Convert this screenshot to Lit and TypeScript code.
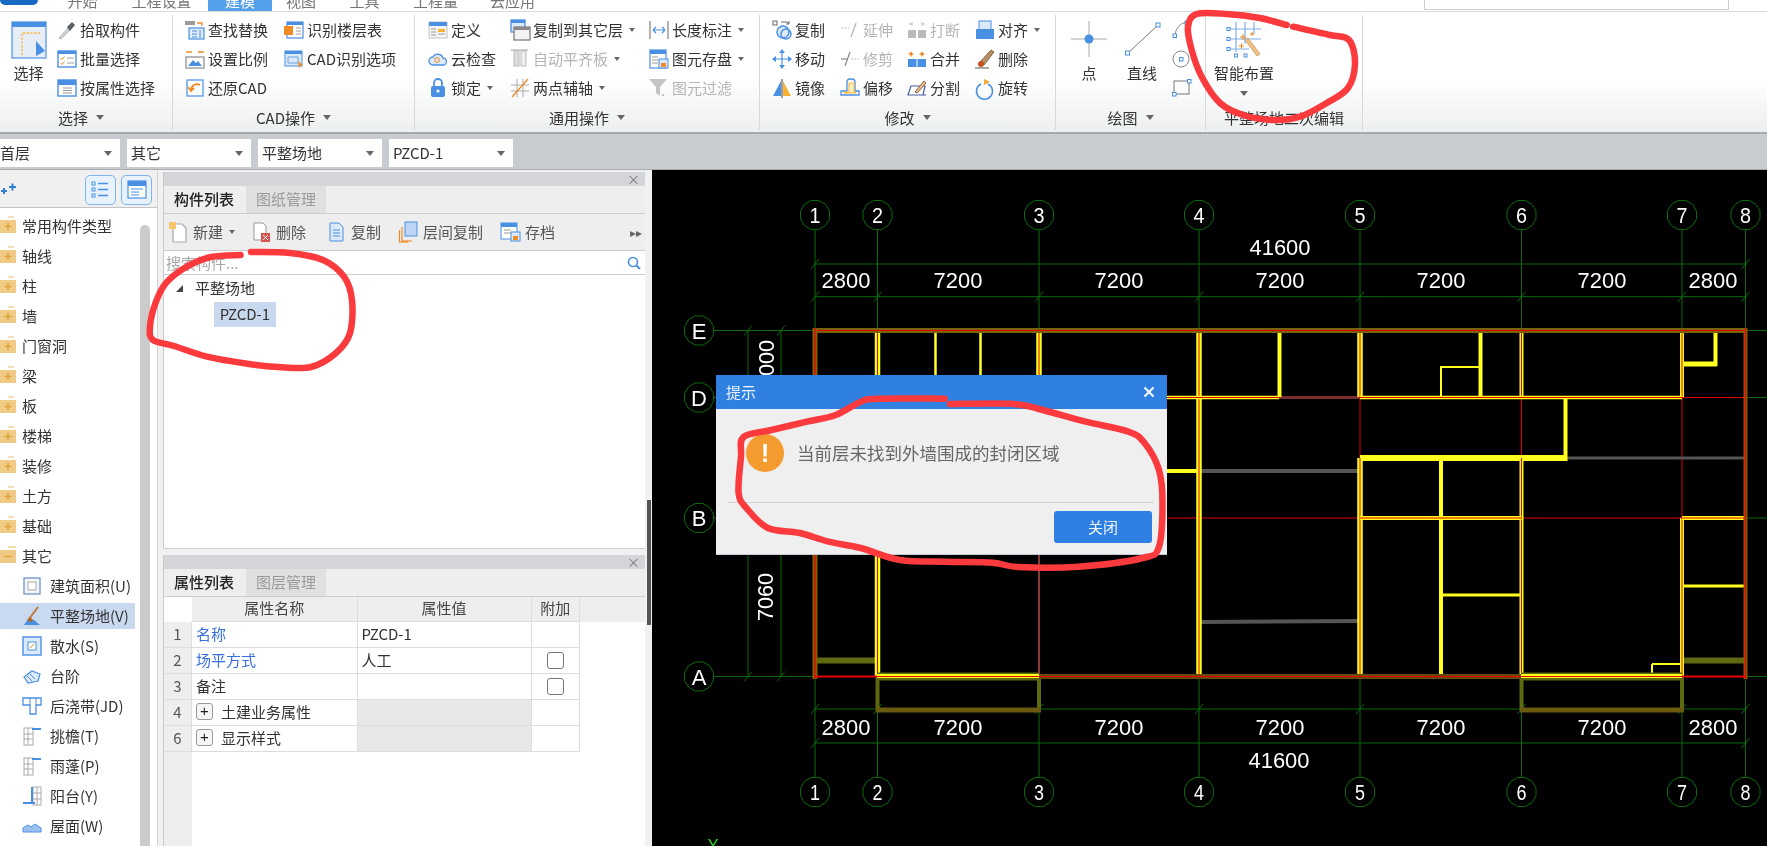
import { LitElement, html, css, svg, nothing } from "lit";
import { customElement } from "lit/decorators.js";

const B = "#4a90e2", L = "#dce9f8", O = "#f08a24", G = "#9b9b9b";

const icons: Record<string, any> = {
  select: svg`<rect x="1" y="1" width="34" height="36" fill="#e6edf7" stroke="#6ea6e6" stroke-width="1.5"/><rect x="1" y="1" width="34" height="5" fill="${B}"/><path d="M11 34V12H30" fill="none" stroke="#f9b233" stroke-width="1.4" stroke-dasharray="2.2 1.6"/><path d="M25 20V35L34 30Z" fill="${B}"/>`,
  dropper: svg`<path d="M2 18L11 8L13 10L4 19Z" fill="#cfd6dd" stroke="${G}" stroke-width=".7"/><path d="M10 7L15 2L18 5L13 11Z" fill="#5a5f66"/>`,
  batch: svg`<rect x="1" y="2" width="18" height="16" fill="#fff" stroke="${B}" stroke-width="1.4"/><rect x="1" y="2" width="18" height="3" fill="${B}"/><path d="M3.5 9l1.5 1.5L7.5 7.5M3.5 14l1.5 1.5L7.5 12.5" fill="none" stroke="${O}"/><path d="M10 9h7M10 14h7" stroke="${G}"/>`,
  attr: svg`<rect x="1" y="2" width="18" height="16" fill="#fff" stroke="${B}" stroke-width="1.4"/><rect x="1" y="2" width="18" height="5" fill="${B}"/><path d="M6 10h9M6 12.5h9M6 15h9" stroke="${G}"/>`,
  find: svg`<rect x="0" y="1" width="10" height="4" fill="${G}"/><path d="M12 3h5v3" fill="none" stroke="${O}" stroke-width="1.3"/><rect x="4" y="8" width="15" height="11" fill="${L}" stroke="${B}" stroke-width="1.2"/><path d="M7 11h5M7 14h5M7 17h5M15 10v8" stroke="${B}"/>`,
  scale: svg`<path d="M1 3h6M13 3h6" stroke="${O}" stroke-width="1.6"/><rect x="1" y="8" width="18" height="11" fill="#fff" stroke="${G}" stroke-width="1.4"/><path d="M3 17l5-6 3 3 2-2 4 5Z" fill="${B}"/>`,
  restore: svg`<rect x="2" y="2" width="16" height="16" fill="none" stroke="${B}" stroke-width="1.2"/><path d="M15 7a6 6 0 0 0-9 5M3 9l3 4 3-3" fill="none" stroke="${O}" stroke-width="1.8"/>`,
  floor: svg`<rect x="3" y="2" width="16" height="16" fill="#fff" stroke="${B}" stroke-width="1.2"/><rect x="3" y="2" width="16" height="3" fill="${B}"/><rect x="0" y="6" width="9" height="9" fill="${O}"/><path d="M12 8h5M12 11h5M12 14h5" stroke="${G}"/>`,
  cadopt: svg`<rect x="1" y="2" width="17" height="15" fill="${L}" stroke="${B}"/><rect x="1" y="2" width="17" height="3" fill="${B}"/><path d="M4 8h10v6H4Z" fill="none" stroke="${B}" stroke-width=".8"/><path d="M14 12l5 4-3 1-1 3Z" fill="${O}"/>`,
  define: svg`<rect x="1" y="2" width="18" height="16" fill="#f4f4f4" stroke="#c4c4c4"/><rect x="1" y="2" width="18" height="4" fill="${B}"/><path d="M3 9h5M3 12h5M3 15h5" stroke="${G}"/><path d="M10 9h7v3h-7Z" fill="#f9b233"/><path d="M10 14h7" stroke="${G}"/>`,
  cloud: svg`<path d="M5 16a4 4 0 0 1 0-8 5.5 5.5 0 0 1 10 1 3.5 3.5 0 0 1 0 7Z" fill="${L}" stroke="${B}" stroke-width="1.3"/><circle cx="9" cy="11" r="2.4" fill="none" stroke="${O}"/>`,
  lock: svg`<rect x="3" y="8" width="14" height="11" rx="2" fill="${B}"/><path d="M6 8V5a4 4 0 0 1 8 0v3" fill="none" stroke="${B}" stroke-width="1.8"/><circle cx="10" cy="13" r="1.6" fill="#fff"/>`,
  copyfl: svg`<rect x="1" y="0" width="14" height="12" fill="${L}" stroke="${B}" stroke-width="1.3"/><rect x="1" y="0" width="14" height="3" fill="${B}"/><rect x="4" y="7" width="16" height="13" fill="#f3f3f3" stroke="#777" stroke-width="1.2"/><rect x="4" y="7" width="16" height="3" fill="#8a8a8a"/>`,
  align: svg`<path d="M1 1h17" stroke="#bbb" stroke-width="1.5"/><rect x="4" y="2" width="5" height="15" fill="#ddd" stroke="#bbb"/><rect x="11" y="2" width="5" height="15" fill="#eee" stroke="#bbb"/>`,
  axis: svg`<path d="M1 7h18M1 13h18M7 1v18M13 1v18" stroke="#aaa"/><path d="M2 19L18 1" stroke="${O}" stroke-width="1.3"/>`,
  len: svg`<path d="M1 1v18M19 1v18" stroke="#666" stroke-width="1"/><path d="M4 10h12M4 10l3-3M4 10l3 3M16 10l-3-3M16 10l-3 3" stroke="${B}" fill="none" stroke-width="1.2"/>`,
  save: svg`<rect x="1" y="1" width="16" height="18" fill="#fff" stroke="${B}" stroke-width="1.2"/><rect x="1" y="1" width="16" height="4" fill="${B}"/><path d="M3 8h6M3 11h6M3 14h6" stroke="${G}"/><rect x="10" y="10" width="9" height="9" fill="${L}" stroke="${B}"/><rect x="12" y="14" width="5" height="4" fill="${O}"/>`,
  filter: svg`<path d="M0 1H18L11 9V18L7 15V9Z" fill="#c4c4c4"/><path d="M13 17h2" stroke="#c4c4c4" stroke-width="2"/>`,
  copy: svg`<rect x="1" y="1" width="4" height="4" fill="none" stroke="#666"/><path d="M9 2h6l2 2M17 1v3h-3" fill="none" stroke="#666"/><circle cx="11" cy="12" r="6" fill="${L}" stroke="${B}" stroke-width="1.5"/><circle cx="14" cy="14" r="5" fill="none" stroke="${B}" stroke-width="1.5"/>`,
  move: svg`<path d="M10 3v14M3 10h14" stroke="${B}" stroke-width="1.2"/><path d="M10 0l3 4H7ZM10 20l3-4H7ZM0 10l4-3v6ZM20 10l-4-3v6Z" fill="${B}"/>`,
  mirror: svg`<path d="M1 18L9 3V18Z" fill="${B}"/><path d="M10 1v19" stroke="#444"/><path d="M11 3L19 18H11Z" fill="#f9b233"/>`,
  extend: svg`<path d="M1 8h8" stroke="#bbb" stroke-dasharray="2 1.5" stroke-width="1.2"/><path d="M11 17L16 3" stroke="#bbb" stroke-width="1.4"/>`,
  trim: svg`<path d="M1 10h7" stroke="#888" stroke-width="1.2"/><path d="M5 17L10 3" stroke="#888" stroke-width="1.2"/><path d="M11 10h8" stroke="#bbb" stroke-dasharray="2 1.5"/>`,
  offset: svg`<path d="M1 17v-4h6V4q0-3 3-3h2q3 0 3 3v9h4v4Z" fill="#fff" stroke="${B}" stroke-width="1.3"/><path d="M4 15h12v-1h-2V5H9v9H4Z" fill="#fdf0c4" stroke="#f9b233"/>`,
  brk: svg`<path d="M2 4h3M15 4h3M5 2v4M15 2v4" stroke="#bbb"/><rect x="1" y="10" width="8" height="8" fill="#bbb"/><rect x="11" y="10" width="8" height="8" fill="#bbb"/>`,
  merge: svg`<path d="M4 2l1 2 2 1-2 1-1 2-1-2-2-1 2-1ZM15 2l1 2 2 1-2 1-1 2-1-2-2-1 2-1Z" fill="${O}"/><rect x="1" y="10" width="18" height="8" fill="${B}"/><path d="M10 10v8" stroke="#fff"/>`,
  split: svg`<path d="M1 17L4 8H18L16 17ZM1 17h18" fill="#fff" stroke="#46609c" stroke-width="1.2"/><path d="M8 14L17 3l2 2-9 10Z" fill="#f2cc7a" stroke="#855"/>`,
  aligno: svg`<rect x="4" y="1" width="12" height="9" fill="${L}" stroke="${B}"/><rect x="1" y="9" width="18" height="10" fill="${B}"/>`,
  del: svg`<path d="M5 13L16 1l3 2L9 16Z" fill="#b89066" stroke="#6a4a2a" stroke-width=".8"/><circle cx="6" cy="15" r="3" fill="#c8501c"/><path d="M0 19h14" stroke="#555"/>`,
  rotate: svg`<path d="M6 5a8 8 0 1 0 7 0" fill="none" stroke="${B}" stroke-width="1.5" transform="translate(0 1)"/><path d="M9 1l6 3-6 3Z" fill="#f9a533"/>`,
  point: svg`<path d="M18 0v36M0 18h36" stroke="#a9a9a9" stroke-width="1"/><circle cx="18" cy="18" r="4.5" fill="${B}"/>`,
  line: svg`<path d="M4 32L34 4" stroke="#777" stroke-width="1"/><rect x="1.5" y="30" width="4" height="4" fill="#fff" stroke="${B}"/><rect x="32" y="2" width="4" height="4" fill="#fff" stroke="${B}"/>`,
  arc: svg`<path d="M3 15Q4 5 14 2" fill="none" stroke="#888"/><rect x="1" y="14" width="3.5" height="3.5" fill="#fff" stroke="${B}"/><rect x="13" y="1" width="3.5" height="3.5" fill="#fff" stroke="${B}"/>`,
  circle: svg`<circle cx="9" cy="10" r="8" fill="none" stroke="#888"/><rect x="7.5" y="8.5" width="3.5" height="3.5" fill="#fff" stroke="${B}"/>`,
  rectd: svg`<rect x="2" y="3" width="15" height="13" fill="none" stroke="#777"/><rect x="0.5" y="14.5" width="3.5" height="3.5" fill="#fff" stroke="${B}"/><rect x="15.5" y="1.5" width="3.5" height="3.5" fill="#fff" stroke="${B}"/>`,
  smart: svg`<path d="M3 8h32M3 18h32M3 28h20M10 1v30M19 1v22M28 1v12" stroke="#7fb0ea" stroke-width="1.2"/><g fill="#fff" stroke="${B}"><rect x="1" y="6.5" width="3" height="3"/><rect x="1" y="16.5" width="3" height="3"/><rect x="1" y="26.5" width="3" height="3"/><rect x="8.5" y="33" width="3" height="3"/><rect x="18" y="33" width="3" height="3"/></g><path d="M19 19L31 35l3-2L22 17Z" fill="#eec287" stroke="#c98d4a" stroke-width=".7"/><path d="M14 16h6M17 13v6M13 25h5M15.5 22.5v5M24 13h4M26 11v4" stroke="${O}" stroke-width="1.1"/>`,
  newf: svg`<path d="M4 2h9l4 4v14H4Z" fill="#fff" stroke="#aaa" stroke-width="1.2"/><path d="M0 0h7v7H0Z" fill="#f7c66a"/>`,
  delf: svg`<path d="M2 1h9l3 3v14H2Z" fill="#fff" stroke="#999"/><rect x="9" y="11" width="9" height="9" fill="#d9534f"/><path d="M11 13l5 5M16 13l-5 5" stroke="#fff"/>`,
  copyf: svg`<path d="M3 1h9l4 4v14H3Z" fill="${L}" stroke="${B}"/><path d="M6 8h7M6 11h7M6 14h7" stroke="${B}"/>`,
  fcopy: svg`<rect x="6" y="0" width="12" height="14" fill="#bcd4f5" stroke="${B}"/><path d="M3 5v14h10M0.5 8v12h9" fill="none" stroke="${O}" stroke-width="1.2"/>`,
  archive: svg`<rect x="0" y="1" width="16" height="16" fill="#fff" stroke="${B}"/><rect x="0" y="1" width="16" height="4" fill="${B}"/><path d="M3 8h7M3 11h7" stroke="${G}"/><rect x="10" y="10" width="9" height="9" fill="${L}" stroke="${B}"/><rect x="12" y="14" width="5" height="4" fill="${O}"/>`,
  search: svg`<circle cx="7" cy="7" r="4.5" fill="none" stroke="${B}" stroke-width="1.6"/><path d="M10 10l4 4" stroke="${B}" stroke-width="2"/>`,
  fplus: svg`<path d="M0 4h16v13H0Z" fill="#efcb85"/><path d="M8 0h6v2H8Z" fill="#f4dfb4"/><path d="M8 7v7M4.5 10.5h7" stroke="#e0a43c" stroke-width="1.6"/>`,
  fminus: svg`<path d="M0 4h16v13H0Z" fill="#efcb85"/><path d="M8 0h8v2H8Z" fill="#f4dfb4"/><path d="M4.5 10.5h7" stroke="#e0a43c" stroke-width="1.6"/>`,
  area: svg`<rect x="2" y="2" width="16" height="16" fill="#f3f6fb" stroke="#7a9bc8" stroke-width="1.4"/><rect x="6" y="6" width="8" height="8" fill="#fff" stroke="#aaa"/>`,
  level: svg`<path d="M2 19l4-6 6 1 6 5Z" fill="${B}"/><path d="M7 13L16 1" stroke="#c27a3a" stroke-width="2"/><path d="M5 14l3-3 3 3-2 2Z" fill="#b5651d"/>`,
  apron: svg`<rect x="1" y="1" width="18" height="18" fill="${L}" stroke="${B}" stroke-width="1.4"/><rect x="6" y="6" width="8" height="8" fill="#fff" stroke="${B}"/><path d="M8 12l4-4" stroke="${O}"/>`,
  step: svg`<path d="M2 11l8-6 8 3-2 7-10 2Z" fill="${L}" stroke="${B}" stroke-width="1.2"/><path d="M5 10l5 5M8 8l5 5" stroke="${B}"/>`,
  pour: svg`<path d="M1 2h18v7h-5v9H8V9H1Z" fill="#fff" stroke="${B}" stroke-width="1.3"/><path d="M8 2v7M14 2v7" stroke="${B}"/>`,
  eave: svg`<rect x="2" y="2" width="9" height="17" fill="#fff" stroke="#aaa"/><path d="M2 8h9M2 13h9M6 2v17" stroke="#aaa"/><path d="M10 3h9" stroke="${B}" stroke-width="2"/>`,
  balcony: svg`<rect x="11" y="1" width="8" height="18" fill="#fff" stroke="#aaa"/><path d="M15 1v18M11 7h8M11 13h8" stroke="#aaa"/><path d="M10 1v15M1 17h12" stroke="${B}" stroke-width="2"/>`,
  roof: svg`<path d="M1 16V12l5-3 3 2 4-3 6 4v4Z" fill="#9cc1ee" stroke="${B}"/>`,
  tlist: svg`<g fill="none" stroke="${B}"><rect x="1" y="2" width="3" height="3"/><rect x="1" y="8" width="3" height="3"/><rect x="1" y="14" width="3" height="3"/></g><path d="M7 3.5h10M7 9.5h10M7 15.5h10" stroke="${B}" stroke-width="1.3"/>`,
  tform: svg`<rect x="1" y="1" width="18" height="17" fill="#fff" stroke="${B}" stroke-width="1.2"/><rect x="1" y="1" width="18" height="5" fill="${B}"/><path d="M4 9h12M4 12h8M4 15h8" stroke="${B}"/>`,
};

const ico = (n: string, s = 20) => html`<svg class="ic" width="${s}" height="${s}" viewBox="0 0 ${s} ${s}">${icons[n]}</svg>`;

type It = [string, string, number?, number?];
interface Col { w?: number; items?: It[]; big?: [string, string, number?, number?]; }
interface Grp { w: number; pad: number; label: string; caret: number; shift?: number; cols: Col[]; }

const groups: Grp[] = [
  { w: 173, pad: 0, label: "选择", caret: 1, shift: 10, cols: [
    { w: 57, big: ["select", "选择", 36] },
    { items: [["dropper", "拾取构件"], ["batch", "批量选择"], ["attr", "按属性选择"]] } ] },
  { w: 242, pad: 12, label: "CAD操作", caret: 1, cols: [
    { w: 99, items: [["find", "查找替换"], ["scale", "设置比例"], ["restore", "还原CAD"]] },
    { items: [["floor", "识别楼层表"], ["cadopt", "CAD识别选项"]] } ] },
  { w: 345, pad: 13, label: "通用操作", caret: 1, cols: [
    { w: 82, items: [["define", "定义"], ["cloud", "云检查"], ["lock", "锁定", 1]] },
    { w: 139, items: [["copyfl", "复制到其它层", 1], ["align", "自动平齐板", 1, 1], ["axis", "两点辅轴", 1]] },
    { items: [["len", "长度标注", 1], ["save", "图元存盘", 1], ["filter", "图元过滤", 0, 1]] } ] },
  { w: 296, pad: 12, label: "修改", caret: 1, cols: [
    { w: 68, items: [["copy", "复制"], ["move", "移动"], ["mirror", "镜像"]] },
    { w: 67, items: [["extend", "延伸", 0, 1], ["trim", "修剪", 0, 1], ["offset", "偏移"]] },
    { w: 68, items: [["brk", "打断", 0, 1], ["merge", "合并"], ["split", "分割"]] },
    { items: [["aligno", "对齐", 1], ["del", "删除"], ["rotate", "旋转"]] } ] },
  { w: 150, pad: 0, label: "绘图", caret: 1, cols: [
    { w: 66, big: ["point", "点", 36] },
    { w: 40, big: ["line", "直线", 36] },
    { items: [["", ""], ["", ""], ["", ""]] } ] },
  { w: 157, pad: 0, label: "平整场地二次编辑", caret: 0, cols: [
    { w: 76, big: ["smart", "智能布置", 36, 1] } ] },
];

const tabs: [string, number][] = [["开始", 65], ["工程设置", 93], ["建模", 64], ["视图", 58], ["工具", 69], ["工程量", 73], ["云应用", 81]];
const rail: [string, string, number?][] = [
  ["fplus", "常用构件类型"], ["fplus", "轴线"], ["fplus", "柱"], ["fplus", "墙"], ["fplus", "门窗洞"], ["fplus", "梁"],
  ["fplus", "板"], ["fplus", "楼梯"], ["fplus", "装修"], ["fplus", "土方"], ["fplus", "基础"], ["fminus", "其它"],
  ["area", "建筑面积(U)", 1], ["level", "平整场地(V)", 2], ["apron", "散水(S)", 1], ["step", "台阶", 1], ["pour", "后浇带(JD)", 1],
  ["eave", "挑檐(T)", 1], ["eave", "雨蓬(P)", 1], ["balcony", "阳台(Y)", 1], ["roof", "屋面(W)", 1],
];

const GX = [814, 876.5, 1038, 1198, 1359, 1520.5, 1681, 1744.5];
const GY: [string, number][] = [["E", 330.5], ["D", 397.5], ["B", 518], ["A", 676.5]];
const GREEN = "#0b6a0b", RED = "#e60000", YEL = "#ffff20", OLV = "#5f6a10", BRN = "#8a5c08", GRY = "#555555";
const poly = (cx: number, cy: number, r: number) =>
  Array.from({ length: 12 }, (_, i) => { const a = Math.PI * 2 * i / 12 + Math.PI / 12; return `${cx + r * Math.cos(a)},${cy + r * Math.sin(a)}`; }).join(" ");
const ln = (x1: number, y1: number, x2: number, y2: number, c: string, w = 1) =>
  svg`<line x1="${x1}" y1="${y1}" x2="${x2}" y2="${y2}" stroke="${c}" stroke-width="${w}"/>`;
const yr = (x1: number, y1: number, x2: number, y2: number, w = 5) => [ln(x1, y1, x2, y2, YEL, w), ln(x1, y1, x2, y2, RED, 1)];
const ow = (x1: number, y1: number, x2: number, y2: number, c = OLV, w = 5) => [ln(x1, y1, x2, y2, c, w), ln(x1, y1, x2, y2, RED, 1.2)];
const tick = (x: number, y: number) => ln(x - 4, y + 5, x + 4, y - 5, GREEN);
const dim = (x: number, y: number, t: string) => svg`<text class="dim" x="${x}" y="${y}" text-anchor="middle" textLength="${t.length * 12.2}" lengthAdjust="spacingAndGlyphs">${t}</text>`;

function cad() {
  const yTop = 264, yTop2 = 296.7, yBot = 709, yBot2 = 743;
  const vals = ["2800", "7200", "7200", "7200", "7200", "7200", "2800"];
  const mids = [845, 957, 1118, 1279, 1440, 1601, 1712];
  return svg`
    ${GX.map((x, i) => svg`
      ${ln(x, 230, x, 330, GREEN)}${ln(x, 677, x, 777, GREEN)}
      <polygon points="${poly(x, 215, 15)}" fill="none" stroke="${GREEN}"/>
      <polygon points="${poly(x, 792, 15)}" fill="none" stroke="${GREEN}"/>
      <text class="bub" x="${x}" y="223" text-anchor="middle" textLength="11" lengthAdjust="spacingAndGlyphs">${i + 1}</text>
      <text class="bub" x="${x}" y="800" text-anchor="middle" textLength="10" lengthAdjust="spacingAndGlyphs">${i + 1}</text>
      ${tick(x, yTop2)}${tick(x, yBot)}`)}
    ${GY.map(([n, y]) => svg`
      ${ln(713, y, 814, y, GREEN)}${ln(1745, y, 1767, y, GREEN)}
      <polygon points="${poly(698, y, 15)}" fill="none" stroke="${GREEN}"/>
      <text class="bub" x="698" y="${y + 8}" text-anchor="middle">${n}</text>
      ${tick(747, y)}${tick(780, y)}`)}
    ${ln(814, yTop, 1746, yTop, GREEN)}${ln(814, yTop2, 1746, yTop2, GREEN)}
    ${ln(814, yBot, 1746, yBot, GREEN)}${ln(814, yBot2, 1746, yBot2, GREEN)}
    ${tick(814, yTop)}${tick(1744.5, yTop)}${tick(814, yBot2)}${tick(1744.5, yBot2)}
    ${ln(747, 330, 747, 677, GREEN)}${ln(780, 330, 780, 677, GREEN)}
    ${dim(1279, 255, "41600")}${dim(1278, 768, "41600")}
    ${mids.map((m, i) => svg`${dim(m, 288, vals[i])}${dim(m, 735, vals[i])}`)}
    <text class="dim" transform="translate(773 364) rotate(-90)" text-anchor="middle" textLength="48" lengthAdjust="spacingAndGlyphs">3000</text>
    <text class="dim" transform="translate(772 597) rotate(-90)" text-anchor="middle" textLength="48" lengthAdjust="spacingAndGlyphs">7060</text>

    ${ln(876.5, 660.5, 816, 660.5, OLV, 6)}${ln(1681, 660.5, 1743, 660.5, OLV, 6)}
    ${ln(876.5, 677, 876.5, 710, OLV, 4)}${ln(1038, 677, 1038, 710, OLV, 4)}${ln(875, 710, 1040, 710, "#6b5b10", 5)}
    ${ln(1520.5, 677, 1520.5, 710, OLV, 4)}${ln(1681, 677, 1681, 710, OLV, 4)}${ln(1519, 710, 1683, 710, "#6b5b10", 5)}

    ${ln(1038, 397, 1038, 677, "#8a3a3a", 2)}
    ${ln(1278, 397.5, 1359, 397.5, "#7a3030", 3)}
    ${ln(1359, 397, 1359, 458, RED)}${ln(1520.5, 397, 1520.5, 458, RED)}${ln(1681, 397, 1681, 518, RED)}
    ${ln(1198, 518, 1359, 518, RED)}${ln(1520, 518, 1681, 518, RED)}${ln(880, 518, 1198, 518, RED)}
    ${ln(1681, 397.5, 1744, 397.5, RED)}${ln(1198, 397, 1198, 677, RED)}
    ${ln(1564, 458, 1744, 458, GRY, 3)}${ln(1198, 471, 1359, 471, GRY, 4)}${ln(1200, 622, 1359, 621, GRY, 4)}

    ${ln(934.5, 332, 934.5, 400, YEL, 2.5)}${ln(979.5, 332, 979.5, 400, YEL, 2.5)}
    ${ln(1278.5, 332, 1278.5, 397, YEL, 4)}${ln(1479.5, 332, 1479.5, 397, YEL, 4)}
    ${ln(1440, 367, 1480, 367, YEL, 2)}${ln(1440, 366, 1440, 397, YEL, 2)}
    ${ln(1714.5, 329, 1714.5, 366, YEL, 4)}${ln(1683, 364, 1716, 364, YEL, 5)}
    ${ln(1564.5, 397, 1564.5, 461, YEL, 4)}${ln(1359, 458, 1566, 458, YEL, 6)}
    ${ln(1440, 458, 1440, 677, YEL, 4)}${ln(1440, 595, 1520, 595, YEL, 3)}
    ${ln(1681, 586, 1744, 586, YEL, 3)}${ln(1198, 471, 1140, 471, YEL, 4)}
    ${ln(1651, 664, 1681, 664, YEL, 2)}${ln(1651, 664, 1651, 677, YEL, 2)}
    ${yr(876.5, 332, 876.5, 677, 5.5)}${yr(1038, 332, 1038, 397, 5.5)}
    ${yr(1198, 332, 1198, 677, 5.5)}${yr(1359, 332, 1359, 397, 5.5)}${yr(1359, 458, 1359, 677, 5.5)}
    ${yr(1520.5, 332, 1520.5, 397, 4)}${yr(1520.5, 458, 1520.5, 677, 4)}${yr(1681, 332, 1681, 397, 4)}${yr(1681, 518, 1681, 677, 4)}
    ${yr(876, 397.5, 1278, 397.5, 3.5)}${yr(1359, 397.5, 1681, 397.5, 3.5)}
    ${yr(1359, 518, 1520.5, 518, 4)}${yr(1681, 518, 1744, 518, 4)}

    ${ow(812, 330.5, 1746, 330.5, "#7a6208", 5)}
    ${ow(814, 328, 814, 679, BRN, 5)}${ow(1744.5, 328, 1744.5, 679, BRN, 4)}
    ${ln(814, 676.5, 876, 676.5, RED, 2)}${ln(1681, 676.5, 1745, 676.5, RED, 2)}
    ${ow(1038, 676.5, 1520, 676.5, "#6a4a08", 5)}
    ${ln(876, 676.5, 1038, 676.5, OLV, 8)}${ln(876, 676, 1038, 676, YEL, 4)}${ln(876, 676.5, 1038, 676.5, RED, 1)}
    ${ln(1520, 676.5, 1681, 676.5, OLV, 8)}${ln(1520, 676, 1681, 676, YEL, 4)}${ln(1520, 676.5, 1681, 676.5, RED, 1)}
    <text class="axis" x="712" y="851" text-anchor="middle">Y</text>
  `;
}

const smooth = (p: number[][]) => {
  let d = `M${p[0][0]} ${p[0][1]}`;
  for (let i = 0; i < p.length - 1; i++) {
    const a = p[Math.max(i - 1, 0)], b = p[i], c = p[i + 1], e = p[Math.min(i + 2, p.length - 1)];
    d += `C${b[0] + (c[0] - a[0]) / 6} ${b[1] + (c[1] - a[1]) / 6} ${c[0] - (e[0] - b[0]) / 6} ${c[1] - (e[1] - b[1]) / 6} ${c[0]} ${c[1]}`;
  }
  return d;
};
const pens = [
  [[240.5, 255], [211, 257], [186.6, 266.7], [166, 283], [155.5, 303], [150, 326.7], [153, 340], [174, 346], [207, 356.7], [249, 364], [278, 367], [311, 367], [336, 353], [350, 333], [352, 300], [344, 276.7], [323, 260], [290, 253], [251, 252]],
  [[944.6, 398.7], [878.6, 398.7], [860.7, 401.7], [835.7, 415], [807, 421.7], [771.4, 430], [743.6, 437], [741, 456.7], [738.6, 493], [746.4, 508], [767.9, 528], [800, 533], [828.6, 541.7], [860.7, 548], [900, 560], [946, 561.7], [992.9, 562.7], [1018, 567], [1078.6, 566.7], [1142.9, 558], [1159, 546.7], [1162.5, 503], [1159, 470], [1144.6, 443], [1128.6, 431.7], [1085.7, 421.7], [1042.9, 410], [1014, 404], [950, 404]],
  [[1286.7, 25], [1260, 18], [1226.7, 14], [1196.7, 14], [1188, 26.7], [1191.7, 50], [1201.7, 76.7], [1220, 103], [1243, 115], [1273, 120], [1300, 116.7], [1326.7, 103], [1348, 88], [1355, 63], [1349, 40], [1330, 35], [1293, 26.7]],
];

const smallDraw = ["arc", "circle", "rectd"];

@customElement("app-root")
export class AppRoot extends LitElement {
  static styles = css`
    :host { display: block; position: relative; width: 1767px; height: 846px; overflow: hidden; background: #fff;
      font: 15px/20px "Noto Sans CJK SC", "Liberation Sans", sans-serif; color: #333; }
    .root { display: flex; flex-direction: column; height: 846px; filter: blur(.4px); }
    .ic { display: block; flex: none; overflow: visible; }

    .top { height: 12px; flex: none; display: flex; overflow: hidden; background: #fff; border-bottom: 1px solid #dcdcdc; box-sizing: border-box; position: relative; }
    .logo { width: 38px; height: 5px; flex: none; background: #1769c4; border-radius: 0 0 8px 8px; }
    .logoGap { width: 12px; flex: none; }
    .tab { flex: none; text-align: center; color: #777; }
    .tab span { display: block; line-height: 16px; margin-top: -7px; }
    .tab.on { background: #55a0ea; color: #fff; }
    .tabGap { flex: 1; }
    .tsearch { width: 305px; height: 10px; flex: none; box-sizing: border-box; background: #fff; border: 1px solid #cfcfcf; border-top: 0; margin-right: 38px; }

    .ribbon { height: 122px; flex: none; display: flex; box-sizing: border-box; border-bottom: 2px solid #a6a9ac;
      background: linear-gradient(#fff 0, #fff 55%, #eceff0 100%); }
    .grp { flex: none; display: flex; flex-direction: column; box-sizing: border-box; margin-top: 3px; height: 115px; border-right: 1px solid #d6d8d9; }
    .gbody { display: flex; height: 90px; flex: none; }
    .gcol { flex: none; display: flex; flex-direction: column; }
    .gfoot { height: 26px; display: flex; align-items: center; justify-content: center; gap: 8px; box-sizing: border-box; white-space: nowrap; }
    .caret { width: 0; height: 0; border: 4px solid transparent; border-top: 5px solid #666; border-bottom: 0; flex: none; }
    .caret.sm { border-width: 3.5px; border-top-width: 4px; border-bottom: 0; margin-left: 6px; }
    .it { height: 29px; display: flex; align-items: center; white-space: nowrap; }
    .it .ib { width: 20px; margin-right: 3px; flex: none; }
    .it.off { color: #b4b4b4; }
    .big { display: flex; flex-direction: column; align-items: center; padding-top: 6px; }
    .big .bl { margin-top: 5px; line-height: 22px; white-space: nowrap; }
    .big .caret { margin-top: 7px; }
    .drawCol { margin-left: 10px; }

    .tools { height: 36px; flex: none; display: flex; gap: 7px; background: #c8cbcf; box-sizing: border-box; padding-top: 5px; border-bottom: 1px solid #a8acb0; }
    .dd { height: 28px; background: #fff; box-sizing: border-box; display: flex; align-items: center; justify-content: space-between; padding: 0 8px 0 4px; flex: none; width: 124px; }
    .dd:first-child { width: 120px; padding-left: 0; }

    .main { flex: 1; display: flex; min-height: 0; background: #f1f1f1; }
    .rail { width: 157px; flex: none; background: #fff; border-right: 1px solid #d2d2d2; display: flex; flex-direction: column; }
    .rhead { height: 35px; flex: none; background: #f0f0f0; border-bottom: 1px solid #c4c4c4; display: flex; align-items: center; padding: 2px 5px 0 0; gap: 5px; }
    .plus { flex: 1; }
    .rbtn { width: 31px; height: 30px; box-sizing: border-box; border: 1px solid #7db5ef; border-radius: 5px; background: #e7f2fd; display: flex; align-items: center; justify-content: center; }
    .rbody { flex: 1; display: flex; min-height: 0; }
    .rlist { width: 140px; flex: none; padding-top: 3px; }
    .rrow { height: 30px; display: flex; align-items: center; white-space: nowrap; }
    .rrow .ib { width: 16px; margin-right: 6px; flex: none; }
    .rrow.ch { padding-left: 17px; margin-right: 5px; }
    .rrow.ch .ib { width: 20px; margin: 0 8px 0 5px; }
    .rrow.sel { background: #c9daf0; height: 26px; margin: 2px 5px 2px 0; }
    .sbar { width: 10px; flex: none; background: #cbcbcb; margin-top: 17px; border-radius: 5px 5px 0 0; }

    .panels { width: 482px; flex: none; padding: 2px 0 0 5px; display: flex; flex-direction: column; gap: 6px; }
    .panel { display: flex; flex-direction: column; border-left: 1px solid #c8c8c8; background: #fff; }
    .panel.p1 { height: 376px; flex: none; border-bottom: 1px solid #ccc; }
    .panel.p2 { flex: 1; min-height: 0; }
    .phead { height: 14px; flex: none; background: #d3d5d8; display: flex; justify-content: flex-end; align-items: center; padding-right: 5px; color: #777; font-size: 13px; line-height: 14px; }
    .ptabs { height: 27px; flex: none; display: flex; background: #eee; border-bottom: 1px solid #ccc; }
    .ptab { width: 80px; text-align: center; line-height: 26px; margin-right: 2px; color: #222; font-weight: 500; }
    .ptab.off { background: #e0e0e0; color: #9a9a9a; font-weight: 400; }
    .pbar { height: 36px; flex: none; display: flex; align-items: center; background: #eee; border-bottom: 1px solid #ccc; color: #555; white-space: nowrap; }
    .pb { display: flex; align-items: center; flex: none; }
    .pb .ib { width: 20px; margin-right: 4px; }
    .more { margin-left: auto; margin-right: 3px; color: #666; font-size: 12px; }
    .psearch { height: 24px; flex: none; display: flex; align-items: center; justify-content: space-between; border-bottom: 1px solid #ccc; color: #a8a8a8; padding: 0 3px 0 2px; box-sizing: border-box; }
    .tree { padding-top: 1px; }
    .tr1 { display: flex; align-items: center; height: 24px; padding-left: 12px; }
    .tri { width: 0; height: 0; border-left: 7px solid transparent; border-bottom: 7px solid #444; margin-right: 12px; }
    .tr2 { width: 62px; height: 25px; margin: 2px 0 0 50px; background: #c8d8ee; text-align: center; line-height: 24px; }

    .tbl { display: grid; grid-template-columns: 28px 165.5px 174px 48.5px 1fr; grid-template-rows: 25px; grid-auto-rows: 26px; background: #fff; }
    .c { border-right: 1px solid #ddd; border-bottom: 1px solid #ddd; box-sizing: border-box; display: flex; align-items: center; padding: 0 0 2px 4px; white-space: nowrap; min-width: 0; }
    .c.h { background: #eee; justify-content: center; padding: 0 0 2px; color: #444; }
    .c.n { background: #eee; justify-content: center; padding: 0 0 2px; color: #555; }
    .c.e { border: 0; padding: 0; }
    .c.h.last { border: 0; }
    .c.gr { background: #e8e8e8; }
    .c.bl { color: #3a6fe0; }
    .c.ce { justify-content: center; padding: 0; }
    .ck { width: 17px; height: 17px; border: 1px solid #777; border-radius: 3px; box-sizing: border-box; background: #fff; }
    .pl { width: 17px; height: 17px; box-sizing: border-box; border: 1px solid #999; border-radius: 3px; text-align: center; line-height: 14px; margin-right: 8px; color: #222; font-family: "Liberation Sans", sans-serif; background: #f6f6f6; }
    .tail { flex: 1; display: flex; min-height: 0; }
    .tail i { width: 28px; background: #eee; display: block; }

    .split { width: 7px; flex: none; display: flex; flex-direction: column; }
    .grip { width: 4px; height: 125px; background: #555; margin: 330px 0 0 2px; }
    .canvas { flex: 1; background: #000; min-width: 0; overflow: hidden; }
    .canvas svg { display: block; }
    .dim { fill: #fff; font: 22px "Liberation Sans", sans-serif; }
    .bub { fill: #fff; font: 22px "Liberation Sans", sans-serif; }
    .axis { fill: #20e020; font: 16px "Liberation Sans", sans-serif; }

    .dlg { position: absolute; left: 716px; top: 375px; width: 451px; height: 180px; background: #efefef; border-bottom: 1px solid #c5ccd8; box-sizing: border-box; display: flex; flex-direction: column; filter: blur(.4px); }
    .dt { height: 34px; flex: none; background: #2f80e0; color: #eaf3ff; display: flex; align-items: center; justify-content: space-between; padding: 0 12px 0 10px; }
    .dm { height: 93px; flex: none; display: flex; align-items: flex-start; padding: 31px 0 0 30px; box-sizing: border-box; color: #666; font-size: 17.5px; line-height: 26px; white-space: nowrap; }
    .warn { width: 38px; height: 38px; border-radius: 50%; background: #f59a2f; color: #fff; text-align: center; flex: none; margin: -6px 13px 0 0; font: bold 26px/38px "Liberation Sans", sans-serif; }
    .df { margin: 0 13px 0 12px; border-top: 1px solid #d2d2d2; display: flex; justify-content: flex-end; padding-top: 8px; }
    .btn { width: 98px; height: 32px; margin-right: 2px; background: #2f80e2; color: #f0f6ff; border-radius: 3px; text-align: center; line-height: 32px; font-size: 15px; }
    .pen { position: absolute; left: 0; top: 0; pointer-events: none; }
  `;

  private item(i: It) {
    if (!i[0]) return html`<div class="it"></div>`;
    return html`<div class="it ${i[3] ? "off" : ""}"><span class="ib">${ico(i[0])}</span>${i[1]}${i[2] ? html`<span class="caret sm"></span>` : nothing}</div>`;
  }

  private group(g: Grp) {
    return html`<div class="grp" style="width:${g.w}px">
      <div class="gbody" style="padding-left:${g.pad}px">
        ${g.cols.map((c) => c.big
          ? html`<div class="gcol big" style="width:${c.w}px">${ico(c.big[0], c.big[2])}<span class="bl">${c.big[1]}</span>${c.big[3] ? html`<span class="caret"></span>` : nothing}</div>`
          : g.label === "绘图"
            ? html`<div class="gcol drawCol">${smallDraw.map((n) => html`<div class="it">${ico(n)}</div>`)}</div>`
            : html`<div class="gcol" style="${c.w ? `width:${c.w}px` : ""}">${c.items!.map((i) => this.item(i))}</div>`)}
      </div>
      <div class="gfoot" style="padding-right:${g.shift ?? 0}px">${g.label}${g.caret ? html`<span class="caret"></span>` : nothing}</div>
    </div>`;
  }

  private pbtn(n: string, t: string, ml: number, caret = false) {
    return html`<div class="pb" style="margin-left:${ml}px"><span class="ib">${ico(n)}</span>${t}${caret ? html`<span class="caret sm"></span>` : nothing}</div>`;
  }

  private cell(cls: string, c: unknown = "") { return html`<div class="c ${cls}">${c}</div>`; }

  render() {
    const tb: [string, string, string, number, string][] = [
      ["1", "名称", "PZCD-1", 0, "bl"], ["2", "场平方式", "人工", 1, "bl"], ["3", "备注", "", 1, ""],
    ];
    return html`
      <div class="root">
        <div class="top">
          <div class="logo"></div><div class="logoGap"></div>
          ${tabs.map(([t, w]) => html`<div class="tab ${t === "建模" ? "on" : ""}" style="width:${w}px"><span>${t}</span></div>`)}
          <div class="tabGap"></div><div class="tsearch"></div>
        </div>
        <div class="ribbon">${groups.map((g) => this.group(g))}</div>
        <div class="tools">
          ${["首层", "其它", "平整场地", "PZCD-1"].map((t) => html`<div class="dd"><span>${t}</span><span class="caret"></span></div>`)}
        </div>
        <div class="main">
          <div class="rail">
            <div class="rhead">
              <div class="plus"><svg width="18" height="14" viewBox="0 0 18 14"><path d="M1 9h6M4 6v6M9 5h7M12.5 1.5v7" stroke="#2f7fd8" stroke-width="2"/></svg></div>
              <div class="rbtn">${ico("tlist")}</div><div class="rbtn">${ico("tform")}</div>
            </div>
            <div class="rbody">
              <div class="rlist">
                ${rail.map(([n, t, k]) => html`<div class="rrow ${k ? "ch" : ""} ${k === 2 ? "sel" : ""}"><span class="ib">${ico(n)}</span>${t}</div>`)}
              </div>
              <div class="sbar"></div>
            </div>
          </div>
          <div class="panels">
            <div class="panel p1">
              <div class="phead">×</div>
              <div class="ptabs"><div class="ptab">构件列表</div><div class="ptab off">图纸管理</div></div>
              <div class="pbar">
                ${this.pbtn("newf", "新建", 5, true)}${this.pbtn("delf", "删除", 17)}${this.pbtn("copyf", "复制", 21)}${this.pbtn("fcopy", "层间复制", 18)}${this.pbtn("archive", "存档", 18)}
                <span class="more">▸▸</span>
              </div>
              <div class="psearch"><span>搜索构件...</span><svg width="16" height="16" viewBox="0 0 16 16">${icons.search}</svg></div>
              <div class="tree">
                <div class="tr1"><span class="tri"></span>平整场地</div>
                <div class="tr2">PZCD-1</div>
              </div>
            </div>
            <div class="panel p2">
              <div class="phead">×</div>
              <div class="ptabs"><div class="ptab">属性列表</div><div class="ptab off">图层管理</div></div>
              <div class="tbl">
                <div class="c e"></div>${this.cell("h", "属性名称")}${this.cell("h", "属性值")}${this.cell("h", "附加")}${this.cell("h last")}
                ${tb.map(([n, a, v, k, cl]) => html`
                  ${this.cell("n", n)}${this.cell(cl, a)}${this.cell("", v)}${this.cell("ce", k ? html`<span class="ck"></span>` : "")}<div class="c e"></div>`)}
                ${[["4", "土建业务属性"], ["6", "显示样式"]].map(([n, a]) => html`
                  ${this.cell("n", n)}${this.cell("", html`<span class="pl">+</span>${a}`)}${this.cell("gr")}${this.cell("")}<div class="c e"></div>`)}
              </div>
              <div class="tail"><i></i></div>
            </div>
          </div>
          <div class="split"><div class="grip"></div></div>
          <div class="canvas">
            <svg width="1116" height="676" viewBox="651 170 1116 676">${cad()}</svg>
          </div>
        </div>
      </div>
      <div class="dlg">
        <div class="dt"><span>提示</span><svg width="12" height="12" viewBox="0 0 12 12"><path d="M1.5 1.5l9 9M10.5 1.5l-9 9" stroke="#fff" stroke-width="1.8"/></svg></div>
        <div class="dm"><span class="warn">!</span><span>当前层未找到外墙围成的封闭区域</span></div>
        <div class="df"><div class="btn">关闭</div></div>
      </div>
      <svg class="pen" width="1767" height="846" viewBox="0 0 1767 846">
        ${pens.map((p) => svg`<path d="${smooth(p)}" fill="none" stroke="#fa3a3c" stroke-width="6.5" stroke-linecap="round" stroke-linejoin="round"/>`)}
      </svg>
    `;
  }
}
